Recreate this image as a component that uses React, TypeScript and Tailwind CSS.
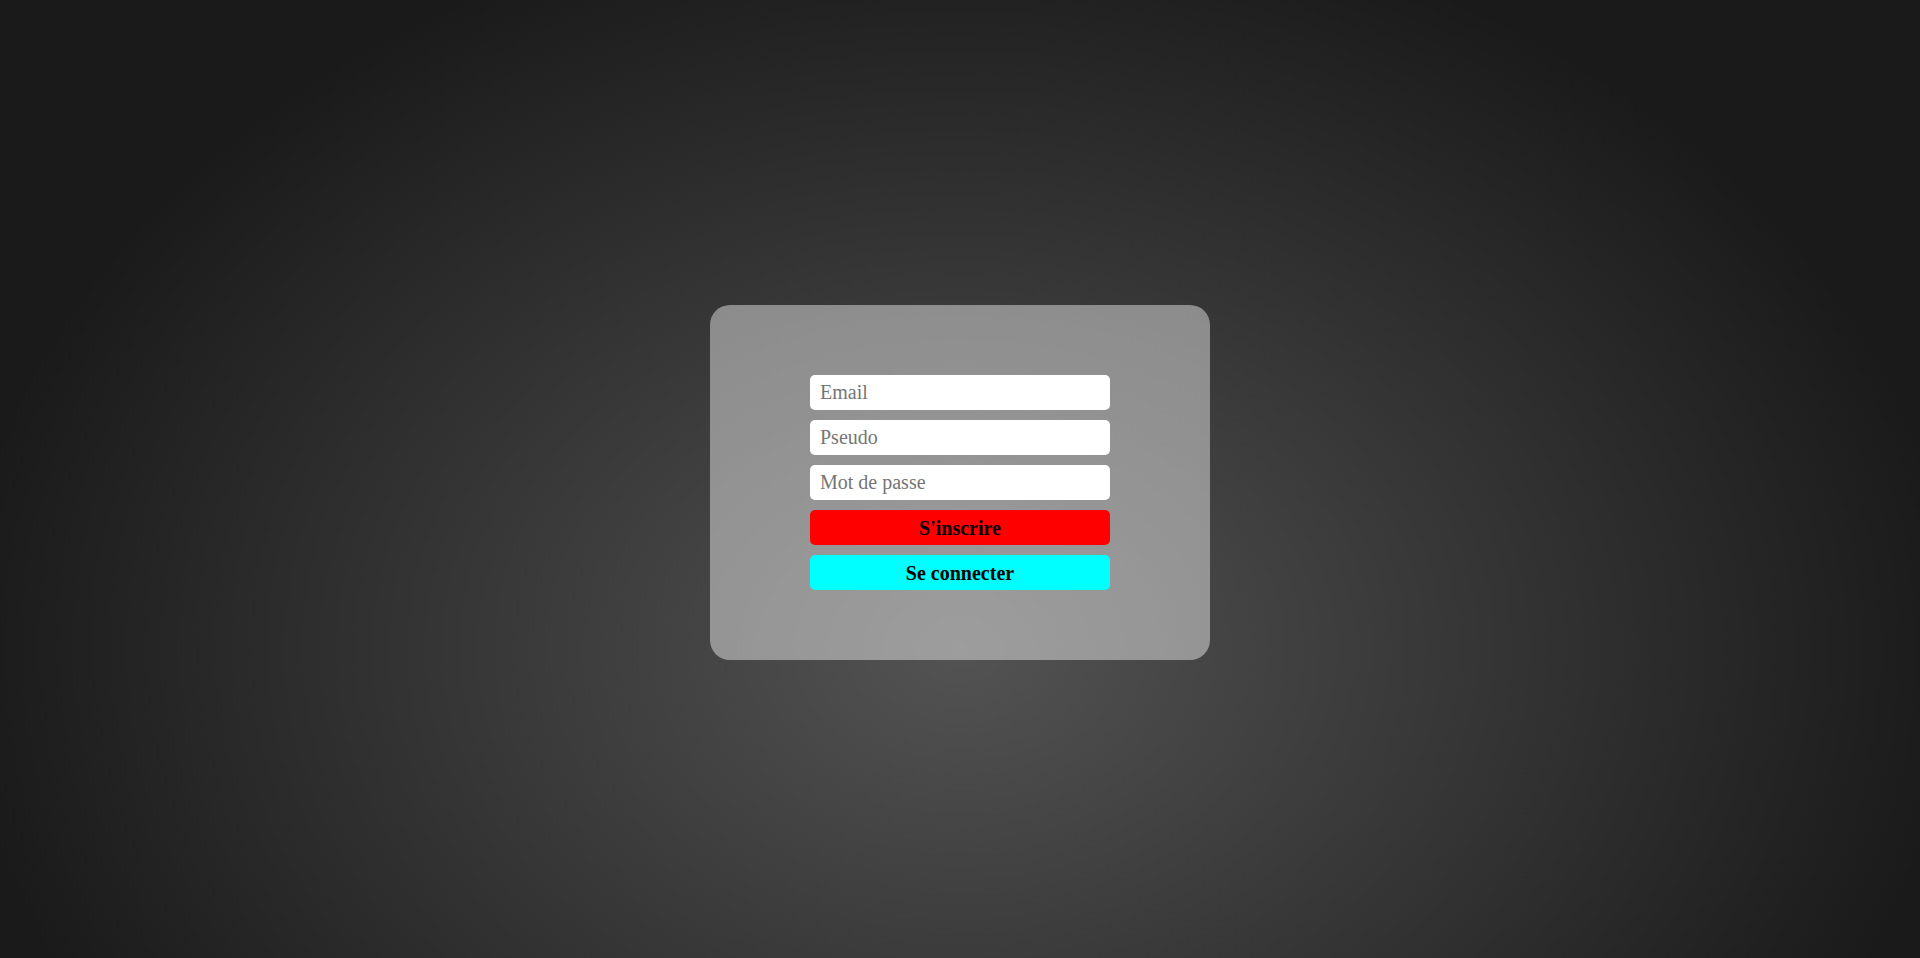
import { useState } from 'react';

export default function App() {
  const [email, setEmail] = useState('');
  const [pseudo, setPseudo] = useState('');
  const [password, setPassword] = useState('');

  return (
    <div
      className="min-h-screen flex items-center justify-center pt-[7px] bg-[radial-gradient(ellipse_1000px_750px_at_50%_650px,#535353_0%,#1a1a1a_100%)]"
      style={{ fontFamily: '"Liberation Serif", "Times New Roman", serif' }}
    >
      {/* Form card */}
      <div className="w-[500px] py-[70px] rounded-[20px] bg-[rgba(255,255,255,0.43)] flex flex-col items-center gap-[10px]">
        <input
          type="email"
          placeholder="Email"
          value={email}
          onChange={(e) => setEmail(e.target.value)}
          className="w-[300px] h-[35px] px-[10px] rounded-[5px] bg-white text-[20px] text-black placeholder:text-[#757575] outline-none border-0"
        />
        <input
          type="text"
          placeholder="Pseudo"
          value={pseudo}
          onChange={(e) => setPseudo(e.target.value)}
          className="w-[300px] h-[35px] px-[10px] rounded-[5px] bg-white text-[20px] text-black placeholder:text-[#757575] outline-none border-0"
        />
        <input
          type="password"
          placeholder="Mot de passe"
          value={password}
          onChange={(e) => setPassword(e.target.value)}
          className="w-[300px] h-[35px] px-[10px] rounded-[5px] bg-white text-[20px] text-black placeholder:text-[#757575] outline-none border-0"
        />
        <button className="w-[300px] h-[35px] rounded-[5px] bg-[#ff0000] text-black text-[20px] font-bold">
          S'inscrire
        </button>
        <button className="w-[300px] h-[35px] rounded-[5px] bg-[#00ffff] text-black text-[20px] font-bold">
          Se connecter
        </button>
      </div>
    </div>
  );
}
